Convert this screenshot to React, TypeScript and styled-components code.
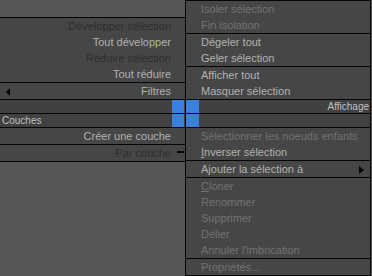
import React from 'react';

import styled, { createGlobalStyle } from 'styled-components';

type Side = 'left' | 'right';
type Tone = 'on' | 'dim' | 'dark';

interface MenuItem {
  label: string;
  tone: Tone;
  accel?: number;
  icon?: 'back' | 'sub' | 'dash';
}

const LINE = '#050505';
const PAGE_BG = '#565656';
const MENU_BG = '#464646';
const STRIP_BG = '#414141';
const ACCENT = '#3a80de';

const TONES: Record<Tone, string> = {
  on: '#b2b2b2',
  dim: '#727272',
  dark: '#2e2e2e',
};

const GlobalStyle = createGlobalStyle`
  html, body {
    margin: 0;
    padding: 0;
    background: ${PAGE_BG};
  }
  body {
    font-family: "Liberation Sans", Arial, sans-serif;
    font-size: 11px;
  }
`;

const Screen = styled.div`
  width: 372px;
  height: 276px;
  overflow: hidden;
  background: ${PAGE_BG};
  display: flex;
  flex-direction: column;
`;

const Half = styled.div<{ $align: string }>`
  display: flex;
  align-items: ${({ $align }) => $align};
`;

const Panel = styled.div<{ $side: Side; $top?: boolean }>`
  background: ${MENU_BG};
  display: flex;
  flex-direction: column;
  ${({ $side }) => ($side === 'left'
    ? 'width: 185px;'
    : `width: 184px; border-left: 1px solid ${LINE}; border-right: 1px solid ${LINE};`)}
  ${({ $top, $side }) => ($top
    ? `border-top: 1px solid ${LINE};${$side === 'left' ? ' margin-top: 17px;' : ''}`
    : `border-bottom: 1px solid ${LINE};`)}
`;

const Group = styled.div`
  display: flex;
  flex-direction: column;
  & + & {
    border-top: 1px solid ${LINE};
  }
`;

const Row = styled.div<{ $side: Side; $tone: Tone }>`
  height: 16px;
  line-height: 16px;
  display: flex;
  align-items: center;
  white-space: nowrap;
  color: ${({ $tone }) => TONES[$tone]};
  justify-content: ${({ $side }) => ($side === 'left' ? 'flex-end' : 'flex-start')};
  padding-left: ${({ $side }) => ($side === 'left' ? '0' : '15px')};
`;

const Label = styled.span`
  flex: 0 0 auto;
`;

const Spacer = styled.span`
  flex: 1 1 auto;
`;

const TailSlot = styled.span`
  width: 14px;
  height: 16px;
  display: flex;
  align-items: center;
  justify-content: flex-end;
`;

const Dash = styled.span`
  width: 7px;
  height: 2px;
  margin-right: 1px;
  margin-top: -2px;
  background: ${LINE};
`;

const Arrow = styled.svg<{ $gap: string }>`
  display: block;
  margin: ${({ $gap }) => $gap};
`;

const Band = styled.div`
  display: flex;
`;

const StripStack = styled.div<{ $side: Side }>`
  display: flex;
  flex-direction: column;
  border-top: 1px solid ${LINE};
  border-bottom: 1px solid ${LINE};
  ${({ $side }) => ($side === 'left'
    ? 'width: 185px;'
    : `width: 184px; border-left: 1px solid ${LINE}; border-right: 1px solid ${LINE};`)}
`;

const Strip = styled.div<{ $side: Side }>`
  height: 13px;
  display: flex;
  align-items: center;
  background: ${STRIP_BG};
  flex-direction: ${({ $side }) => ($side === 'left' ? 'row' : 'row-reverse')};
  & + & {
    border-top: 1px solid ${LINE};
  }
`;

const StripTitle = styled.span<{ $side: Side }>`
  flex: 1 1 auto;
  font-size: 10px;
  line-height: 13px;
  color: #c0c0c0;
  text-align: ${({ $side }) => ($side === 'left' ? 'left' : 'right')};
  padding: ${({ $side }) => ($side === 'left' ? '0 0 0 2px' : '0 1px 0 0')};
`;

const Handle = styled.span<{ $side: Side }>`
  height: 13px;
  background: ${ACCENT};
  width: ${({ $side }) => ($side === 'left' ? '12px' : '13px')};
  margin-right: ${({ $side }) => ($side === 'left' ? '1px' : '0')};
`;

const upperLeft: MenuItem[][] = [
  [
    { label: 'Développer sélection', tone: 'dark' },
    { label: 'Tout développer', tone: 'on' },
    { label: 'Réduire sélection', tone: 'dark' },
    { label: 'Tout réduire', tone: 'on' },
  ],
  [{ label: 'Filtres', tone: 'on', icon: 'back' }],
];

const upperRight: MenuItem[][] = [
  [
    { label: 'Isoler sélection', tone: 'dim' },
    { label: 'Fin isolation', tone: 'dim' },
  ],
  [
    { label: 'Dégeler tout', tone: 'on' },
    { label: 'Geler sélection', tone: 'on' },
  ],
  [
    { label: 'Afficher tout', tone: 'on' },
    { label: 'Masquer sélection', tone: 'on' },
  ],
];

const lowerLeft: MenuItem[][] = [
  [{ label: 'Créer une couche', tone: 'on' }],
  [{ label: 'Par couche', tone: 'dark', icon: 'dash' }],
];

const lowerRight: MenuItem[][] = [
  [
    { label: 'Sélectionner les noeuds enfants', tone: 'dim' },
    { label: 'Inverser sélection', tone: 'on', accel: 0 },
  ],
  [{ label: 'Ajouter la sélection à', tone: 'on', icon: 'sub' }],
  [
    { label: 'Cloner', tone: 'dim', accel: 0 },
    { label: 'Renommer', tone: 'dim' },
    { label: 'Supprimer', tone: 'dim' },
    { label: 'Délier', tone: 'dim' },
    { label: "Annuler l'imbrication", tone: 'dim' },
  ],
  [{ label: 'Propriétés...', tone: 'dim' }],
];

const renderLabel = (item: MenuItem) => {
  if (item.accel === undefined) return <Label>{item.label}</Label>;
  const i = item.accel;
  return (
    <Label>
      {item.label.slice(0, i)}
      <u>{item.label[i]}</u>
      {item.label.slice(i + 1)}
    </Label>
  );
};

const renderItem = (item: MenuItem, side: Side) => (
  <Row key={item.label} $side={side} $tone={item.tone}>
    {item.icon === 'back' && (
      <>
        <Arrow $gap="1px 0 0 6px" width="4" height="8" viewBox="0 0 4 8">
          <polygon points="4,0 4,8 0,4" fill={LINE} />
        </Arrow>
        <Spacer />
      </>
    )}
    {renderLabel(item)}
    {side === 'left' && (
      <TailSlot>{item.icon === 'dash' && <Dash />}</TailSlot>
    )}
    {item.icon === 'sub' && (
      <>
        <Spacer />
        <Arrow $gap="1px 6px 0 0" width="5" height="8" viewBox="0 0 5 8">
          <polygon points="0,0 5,4 0,8" fill={LINE} />
        </Arrow>
      </>
    )}
  </Row>
);

const renderPanel = (groups: MenuItem[][], side: Side, top: boolean) => (
  <Panel $side={side} $top={top}>
    {groups.map((group, i) => (
      <Group key={i}>{group.map(item => renderItem(item, side))}</Group>
    ))}
  </Panel>
);

const App: React.FC = () => (
  <Screen>
    <GlobalStyle />
    <Half $align="flex-end">
      {renderPanel(upperLeft, 'left', true)}
      {renderPanel(upperRight, 'right', true)}
    </Half>
    <Band>
      <StripStack $side="left">
        <Strip $side="left">
          <StripTitle $side="left" />
          <Handle $side="left" />
        </Strip>
        <Strip $side="left">
          <StripTitle $side="left">Couches</StripTitle>
          <Handle $side="left" />
        </Strip>
      </StripStack>
      <StripStack $side="right">
        <Strip $side="right">
          <StripTitle $side="right">Affichage</StripTitle>
          <Handle $side="right" />
        </Strip>
        <Strip $side="right">
          <StripTitle $side="right" />
          <Handle $side="right" />
        </Strip>
      </StripStack>
    </Band>
    <Half $align="flex-start">
      {renderPanel(lowerLeft, 'left', false)}
      {renderPanel(lowerRight, 'right', false)}
    </Half>
  </Screen>
);

export default App;
